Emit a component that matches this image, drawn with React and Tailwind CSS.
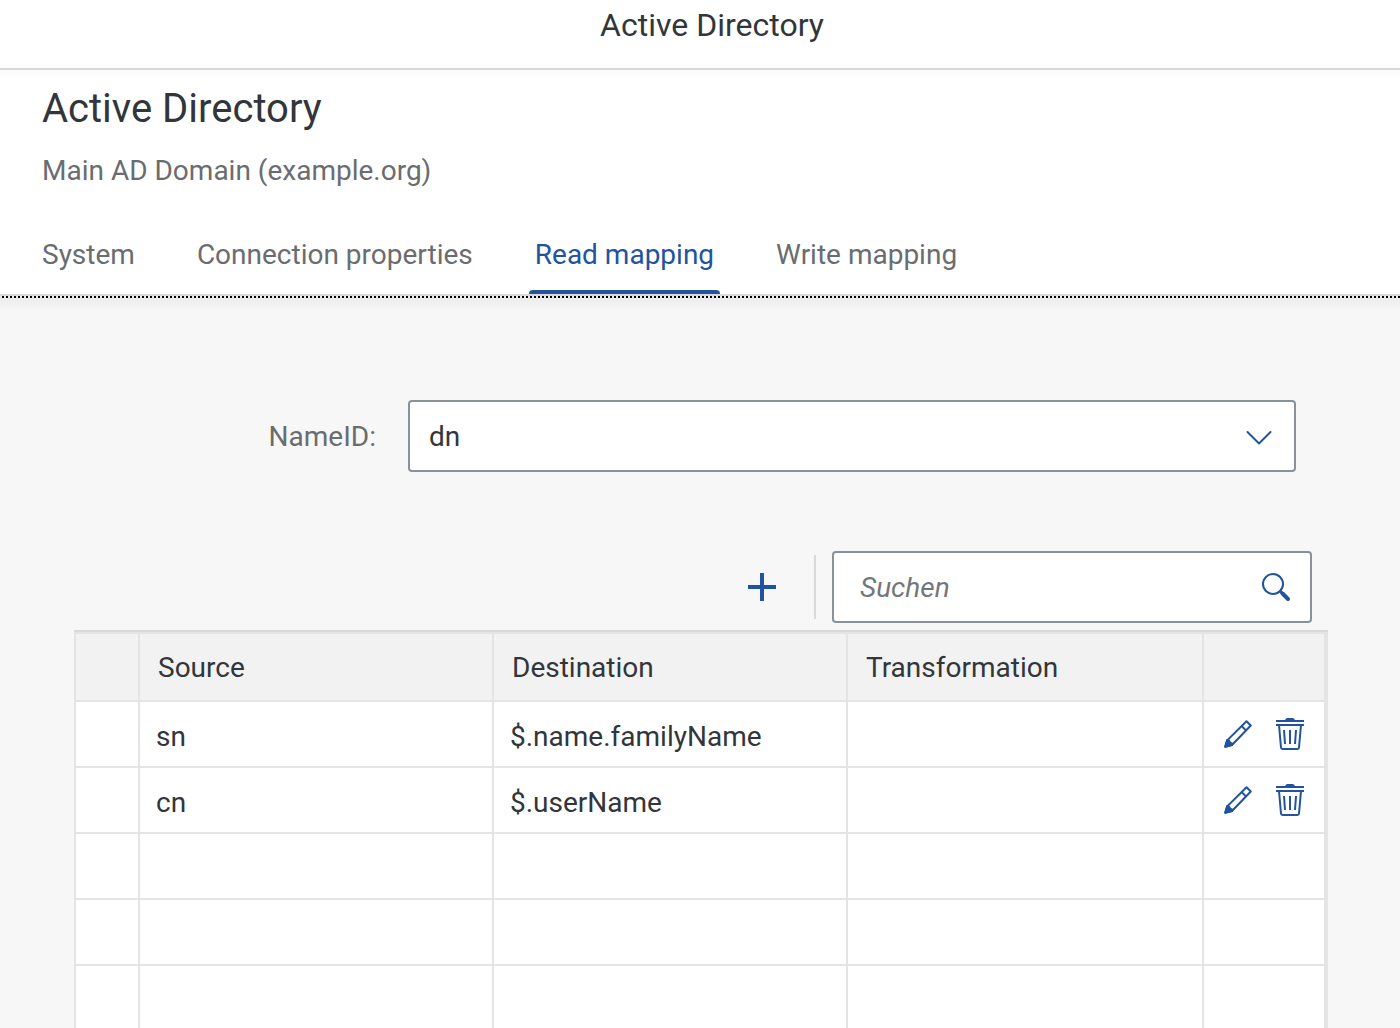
import React from "react";

const tabs = ["System", "Connection properties", "Read mapping", "Write mapping"];

const rows = [
  { source: "sn", destination: "$.name.familyName" },
  { source: "cn", destination: "$.userName" },
  null,
  null,
  null,
];

function PencilIcon() {
  return (
    <svg width="28" height="28" viewBox="0 0 28 28" fill="none" stroke="#22539f" strokeWidth="2" strokeLinejoin="round" aria-hidden="true">
      <path d="M22.5 1.2 26.8 5.5 8 25 1.2 26.8 3.2 20.4Z" />
      <path d="M17.6 6 22 10.4" />
      <path d="M3.2 20 5.2 20.6 6 22.600 8 23.400 8 25 1.2 26.8Z" fill="#22539f" />
    </svg>
  );
}

function TrashIcon() {
  return (
    <svg width="28" height="32" viewBox="0 0 28 32" fill="none" stroke="#22539f" strokeWidth="2" aria-hidden="true">
      <path d="M9 2.2C9.6.8 10.4 0 11.4 0h5.2c1 0 1.8.8 2.4 2.2Z" fill="#22539f" stroke="none" />
      <path d="M0 3h28M0 7h28" />
      <path d="M3 7 5 29.5Q5.1 31 6.6 31h14.8q1.500 0 1.600-1.500L25 7" />
      <path d="M8 12 9 26M14 12v14M20 12 19 26" />
    </svg>
  );
}

function SearchIcon() {
  return (
    <svg width="30" height="30" viewBox="0 0 30 30" fill="none" stroke="#22539f" strokeLinecap="round" aria-hidden="true">
      <circle cx="12" cy="12" r="10" strokeWidth="2" />
      <path d="m19.500 19.500 1.500 1.500" strokeWidth="3" />
      <path d="m21.500 21.500 5.500 5.500" strokeWidth="4" />
    </svg>
  );
}

function Cell({ children }) {
  return <td className="border-r-2 border-b-2 border-[#e4e4e4] px-4 pt-1.5">{children}</td>;
}

function HeaderCell({ children }) {
  return (
    <th scope="col" className="border-r-2 border-b-2 border-[#e4e4e4] px-[18px] pt-0.5 text-left font-normal">
      {children}
    </th>
  );
}

export default function App() {
  return (
    <div className="flex h-screen flex-col overflow-hidden bg-[#f7f7f7] font-['Roboto',sans-serif] text-[28px] leading-9 text-[#32363a]">
      <header className="h-[70px] shrink-0 border-b-2 border-[#d9d9d9] bg-white pt-[5px] pl-6 text-center text-[32px] leading-10">
        Active Directory
      </header>

      <section className="shrink-0 bg-white bg-linear-to-b from-[#fafafa] to-white to-[8px]">
        <h1 className="px-[42px] pt-[13px] text-[40px] leading-[52px]">Active Directory</h1>
        <p className="px-[42px] pt-[18px] text-[#6a6d70]">Main AD Domain (example.org)</p>
        <nav className="mt-8 flex h-[73px] gap-[50px] px-9" role="tablist">
          {tabs.map((tab) =>
            tab === "Read mapping" ? (
              <button key={tab} type="button" role="tab" aria-selected="true" className="flex flex-col justify-between whitespace-nowrap pt-4 text-[#22539f]">
                <span className="px-1.5">{tab}</span>
                <span className="h-1 w-full rounded-t bg-[#22539f]" />
              </button>
            ) : (
              <button key={tab} type="button" role="tab" aria-selected="false" className="flex items-start whitespace-nowrap px-1.5 pt-4 text-[#6a6d70]">
                {tab}
              </button>
            )
          )}
        </nav>
        <div className="h-0.5 bg-[#d9d9d9]" />
        <div className="h-0.5 bg-[#e8e8e8] bg-[repeating-linear-gradient(90deg,transparent_0_2px,#000_2px_4px)]" />
      </section>

      <main className="min-h-0 flex-1 overflow-hidden bg-linear-to-b from-[#ececec] to-[#f7f7f7] to-[12px]">
        <div className="mt-[102px] mr-[104px] flex items-center gap-8">
          <label htmlFor="name-id" className="w-[376px] shrink-0 pt-0.5 text-right text-[#6a6d70]">
            NameID:
          </label>
          <div className="relative flex-1">
            <select id="name-id" defaultValue="dn" className="h-[72px] w-full appearance-none rounded border-2 border-[#89919a] bg-white px-[19px] pt-0.5 text-[#32363a]">
              <option>dn</option>
            </select>
            <svg className="pointer-events-none absolute top-[30px] right-6" width="26" height="15" viewBox="0 0 26 15" fill="none" stroke="#22539f" strokeWidth="2" strokeLinecap="round" strokeLinejoin="round" aria-hidden="true">
              <path d="m1.500 2 11.500 11.500L24.500 2" />
            </svg>
          </div>
        </div>

        <div className="mt-[79px] mr-[88px] flex items-center justify-end gap-4">
          <button type="button" aria-label="Add mapping" className="flex h-16 w-[72px] items-center justify-center">
            <svg width="28" height="28" viewBox="0 0 28 28" stroke="#22539f" strokeWidth="4" aria-hidden="true">
              <path d="M14 0v28M0 14h28" />
            </svg>
          </button>
          <span className="h-16 w-0.5 bg-[#d9d9d9]" />
          <div className="flex h-[72px] w-[480px] items-center rounded border-2 border-[#89919a] bg-white pr-[19px] pl-[26px]">
            <input type="search" aria-label="Suchen" placeholder="Suchen" className="min-w-0 flex-1 pt-0.5 outline-none placeholder:text-[#74777a] placeholder:italic" />
            <button type="button" aria-label="Start search">
              <SearchIcon />
            </button>
          </div>
        </div>

        <div className="mt-[7px] mr-[72px] ml-[74px] border-t-2 border-[#d9d9d9]">
          <table className="w-full table-fixed border-separate border-spacing-0 border-t-2 border-r-2 border-l-2 border-[#e4e4e4] bg-white">
            <colgroup>
              <col className="w-16" />
              <col className="w-[354px]" />
              <col className="w-[354px]" />
              <col />
              <col className="w-[122px]" />
            </colgroup>
            <thead>
              <tr className="h-[68px] bg-[#f2f2f2]">
                <HeaderCell />
                <HeaderCell>Source</HeaderCell>
                <HeaderCell>Destination</HeaderCell>
                <HeaderCell>Transformation</HeaderCell>
                <HeaderCell />
              </tr>
            </thead>
            <tbody>
              {rows.map((row, index) => (
                <tr key={index} className="h-[66px]">
                  <Cell />
                  <Cell>{row?.source}</Cell>
                  <Cell>{row?.destination}</Cell>
                  <Cell />
                  <td className="border-r-2 border-b-2 border-[#e4e4e4] px-5">
                    {row && (
                      <div className="flex items-center justify-between">
                        <button type="button" aria-label={`Edit ${row.source}`}>
                          <PencilIcon />
                        </button>
                        <button type="button" aria-label={`Delete ${row.source}`}>
                          <TrashIcon />
                        </button>
                      </div>
                    )}
                  </td>
                </tr>
              ))}
            </tbody>
          </table>
        </div>
      </main>
    </div>
  );
}
